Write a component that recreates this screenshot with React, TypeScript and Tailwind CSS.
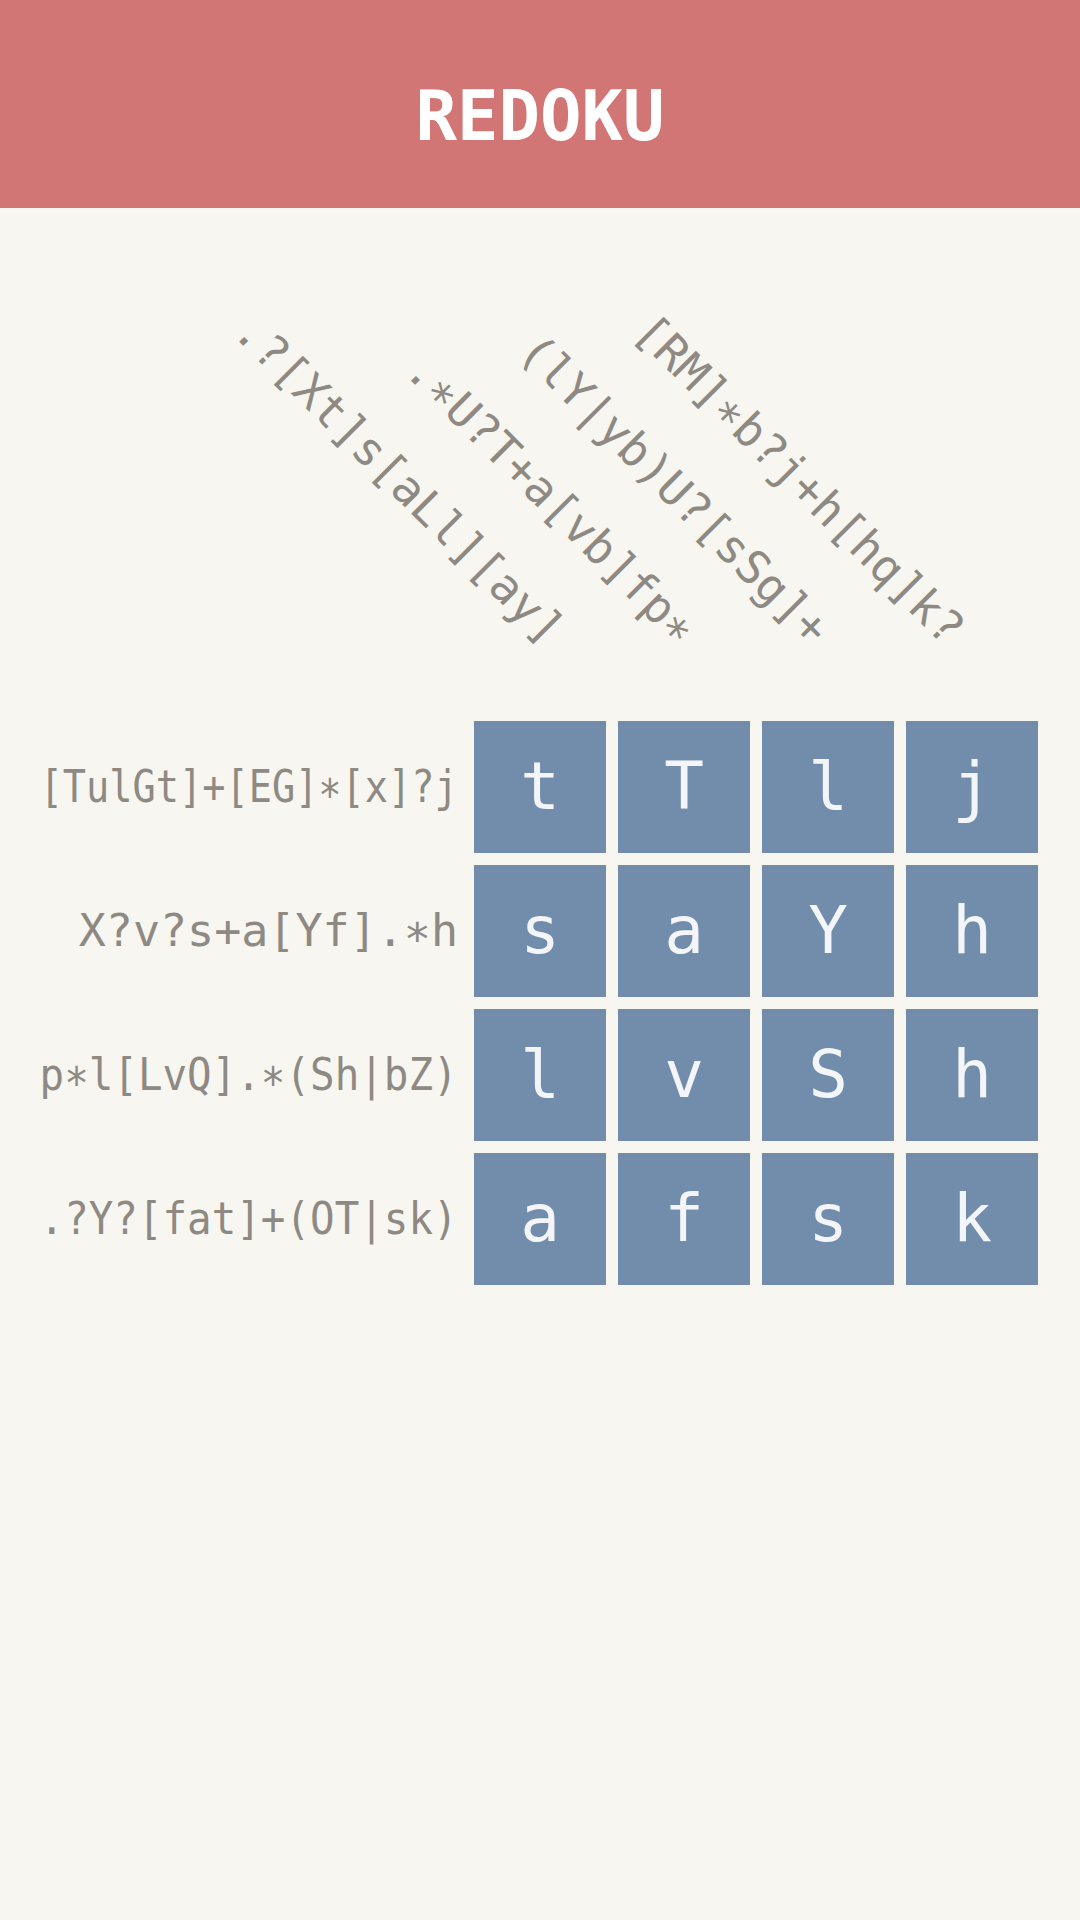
import React from "react";

const colClues = [
  { text: ".?[Xt]s[aLl][ay]", pos: "left-[556px]" },
  { text: ".*U?T+a[vb]fp*", pos: "left-[689px]" },
  { text: "(lY|yb)U?[sSg]+", pos: "left-[822px]" },
  { text: "[RM]*b?j+h[hq]k?", pos: "left-[956px]" },
];

const rowClues = [
  "[TulGt]+[EG]*[x]?j",
  "X?v?s+a[Yf].*h",
  "p*l[LvQ].*(Sh|bZ)",
  ".?Y?[fat]+(OT|sk)",
];

const board = [
  ["t", "T", "l", "j"],
  ["s", "a", "Y", "h"],
  ["l", "v", "S", "h"],
  ["a", "f", "s", "k"],
];

// clue text is squeezed sideways when it is wider than the space left of the grid
const CHAR_W = 45 * 0.602;
const MAX_W = 418;

// the asterisk sits on the middle line in the reference font
const renderClue = (text: string) =>
  text.split("").map((ch, i) =>
    ch === "*" ? (
      <span key={i} className="relative top-[0.22em]">
        *
      </span>
    ) : (
      ch
    )
  );

const App = () => {
  return (
    <div className="min-h-screen bg-[#f7f6f0] font-['DejaVu_Sans_Mono',monospace]">
      {/* Title bar */}
      <header className="h-[208px] bg-[#d17674] flex items-center justify-center pt-6">
        <h1 className="text-[69px] leading-none font-bold text-white">REDOKU</h1>
      </header>

      {/* Column clues */}
      <div className="relative h-[513px]">
        {colClues.map((clue) => (
          <div key={clue.text} className={`absolute top-[428px] w-0 h-0 ${clue.pos}`}>
            <span className="absolute right-0 top-[-23px] whitespace-nowrap text-[46px] leading-none text-[#8e8983] origin-right rotate-45">
              {renderClue(clue.text)}
            </span>
          </div>
        ))}
      </div>

      {/* Row clues + board */}
      <div className="flex">
        <div className="w-[474px] flex flex-col gap-3 pr-4">
          {rowClues.map((clue) => {
            const k = Math.min(1, MAX_W / (clue.length * CHAR_W));
            return (
              <div key={clue} className="h-[132px] flex items-center justify-end">
                <span
                  className="inline-block whitespace-nowrap text-[45px] leading-none text-[#8e8983] origin-right"
                  style={{ transform: `translateY(-1px) scaleX(${k})` }}
                >
                  {renderClue(clue)}
                </span>
              </div>
            );
          })}
        </div>
        <div className="grid grid-cols-4 gap-3">
          {board.flat().map((ch, i) => (
            <div
              key={i}
              className="w-[132px] h-[132px] bg-[#728dac] flex items-center justify-center text-[66px] leading-none text-[#f3f5f8]"
            >
              {ch}
            </div>
          ))}
        </div>
      </div>
    </div>
  );
};

export default App;
